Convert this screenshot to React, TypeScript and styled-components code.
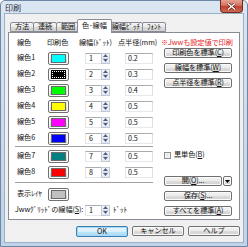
import React from 'react';
import styled, { createGlobalStyle } from 'styled-components';

const GlobalStyle = createGlobalStyle`
  html, body {
    margin: 0;
    padding: 0;
    background: #ffffff;
  }
  body {
    font-family: "Noto Sans CJK JP", "Noto Sans", sans-serif;
    font-size: 7.2px;
    letter-spacing: -0.1px;
    color: #111;
  }
`;

const Window = styled.div`
  box-sizing: border-box;
  width: 248px;
  height: 247px;
  display: flex;
  flex-direction: column;
  border: 1px solid #6d88a6;
  border-radius: 5px 5px 0 0;
  background: linear-gradient(180deg, #dbe6f2 0%, #cddcec 45%, #c0d3e8 100%);
`;

const TitleBar = styled.div`
  height: 12px;
  display: flex;
  align-items: flex-start;
  flex: none;
`;

const Title = styled.div`
  margin: 2px 0 0 4px;
  line-height: 9px;
  font-size: 8px;
  color: #1e2a38;
`;

const CloseButton = styled.div`
  box-sizing: border-box;
  margin: -1px 4px 0 auto;
  width: 23px;
  height: 13px;
  border: 1px solid #6f2a22;
  border-top: none;
  border-radius: 0 0 4px 4px;
  background: linear-gradient(180deg, #e6a293 0%, #d2735f 45%, #c0402c 55%, #cf6a52 100%);
  display: flex;
  align-items: center;
  justify-content: center;
`;

const Client = styled.div`
  flex: 1;
  margin: 0 3px 3px 3px;
  border: 1px solid #9cb0c6;
  background: #f0f0f0;
  padding: 5px 3px 0 3px;
  display: flex;
  flex-direction: column;
`;

const TabStrip = styled.div`
  height: 14px;
  display: flex;
  align-items: flex-end;
  padding-left: 2px;
  margin-bottom: -1px;
  position: relative;
  z-index: 1;
`;

const Tab = styled.div<{ $active?: boolean }>`
  box-sizing: border-box;
  min-width: ${(p) => (p.$active ? '28px' : '24px')};
  height: ${(p) => (p.$active ? '14px' : '10px')};
  margin: ${(p) => (p.$active ? '0 -2px 0 -3px' : '0 0 1px -1px')};
  padding: ${(p) => (p.$active ? '0 4px 2px' : '0 2px')};
  border: 1px solid #898c95;
  border-bottom: ${(p) => (p.$active ? 'none' : '1px solid #898c95')};
  border-radius: 2px 2px 0 0;
  background: ${(p) =>
    p.$active ? '#ffffff' : 'linear-gradient(180deg, #f3f3f3 0%, #ebebeb 50%, #dcdcdc 51%, #d0d0d0 100%)'};
  position: relative;
  z-index: ${(p) => (p.$active ? 2 : 0)};
  display: flex;
  align-items: center;
  justify-content: center;
  white-space: nowrap;
  line-height: 1;
  &:first-child {
    margin-left: 0;
  }
`;

const Panel = styled.div`
  box-sizing: border-box;
  flex: none;
  height: 188px;
  border: 1px solid #898c95;
  background: #ffffff;
  padding: 3px 0 0 8px;
  display: flex;
`;

const LeftTable = styled.div`
  display: flex;
  flex-direction: column;
`;

const Row = styled.div<{ $head?: boolean }>`
  display: grid;
  grid-template-columns: 31px 37px 40px 28px;
  height: ${(p) => (p.$head ? '14px' : '16px')};
  align-items: center;
  white-space: nowrap;
`;

const HeadCell = styled.div<{ $shift?: number }>`
  margin-left: ${(p) => p.$shift ?? 0}px;
  line-height: 1;
`;

const Label = styled.div<{ $span?: boolean }>`
  line-height: 1;
  grid-column: ${(p) => (p.$span ? '1 / 3' : 'auto')};
  margin-left: ${(p) => (p.$span ? '-2px' : '0')};
`;

const Separator = styled.div<{ $gap?: number }>`
  margin: ${(p) => p.$gap ?? 0}px 0 ${(p) => p.$gap ?? 0}px -2px;
  width: 138px;
  height: 0;
  border-top: 1px solid #a0a0a0;
  border-bottom: 1px solid #ffffff;
`;

const SwatchButton = styled.div`
  box-sizing: border-box;
  width: 21px;
  height: 13px;
  border: 1px solid #707070;
  border-radius: 2px;
  background: linear-gradient(180deg, #f2f2f2 0%, #ebebeb 50%, #dddddd 51%, #cfcfcf 100%);
  display: flex;
  align-items: center;
  justify-content: center;
  box-shadow: inset 0 0 0 1px #fcfcfc;
`;

const Swatch = styled.div<{ $color: string; $focus?: boolean }>`
  box-sizing: border-box;
  width: 15px;
  height: 9px;
  background: ${(p) => p.$color};
  border: 1px solid ${(p) => (p.$focus ? '#000' : '#6b6b6b')};
  outline: ${(p) => (p.$focus ? '1px dotted #ffffff' : 'none')};
  outline-offset: -2px;
`;

const Spin = styled.div`
  display: flex;
  height: 11px;
  width: 25px;
`;

const SpinText = styled.div`
  box-sizing: border-box;
  width: 16px;
  height: 11px;
  border: 1px solid #abadb3;
  border-right: none;
  border-bottom-color: #e3e9ef;
  border-left-color: #e2e3ea;
  background: #fff;
  padding-left: 3px;
  line-height: 9px;
`;

const SpinButtons = styled.div`
  box-sizing: border-box;
  width: 9px;
  height: 11px;
  border: 1px solid #c2c9d4;
  display: flex;
  flex-direction: column;
`;

const SpinHalf = styled.div`
  flex: 1;
  display: flex;
  align-items: center;
  justify-content: center;
  background: linear-gradient(180deg, #f7f8fa 0%, #e6e9ef 100%);
  & + & {
    border-top: 1px solid #d4d9e2;
  }
`;

const TextBox = styled.div`
  box-sizing: border-box;
  width: 28px;
  height: 11px;
  border: 1px solid #abadb3;
  border-bottom-color: #e3e9ef;
  border-left-color: #e2e3ea;
  border-right-color: #dbdfe6;
  background: #fff;
  padding-left: 2px;
  line-height: 9px;
`;

const UnitCell = styled.div`
  display: flex;
  align-items: center;
`;

const Unit = styled.span`
  margin-left: 3px;
  line-height: 1;
`;

const RightColumn = styled.div`
  margin-left: 11px;
  width: 68px;
  display: flex;
  flex-direction: column;
`;

const RedNote = styled.div`
  height: 12px;
  margin-left: -3px;
  color: #e8231c;
  white-space: nowrap;
  line-height: 12px;
`;

const Button = styled.div<{ $width?: number; $default?: boolean; $top?: number }>`
  box-sizing: border-box;
  width: ${(p) => (p.$width ? `${p.$width}px` : '100%')};
  height: ${(p) => (p.$default ? '11px' : '10px')};
  margin-top: ${(p) => p.$top ?? 0}px;
  border: 1px solid ${(p) => (p.$default ? '#3c7fb1' : '#707070')};
  border-radius: 2px;
  background: ${(p) =>
    p.$default
      ? 'linear-gradient(180deg, #eaf6fd 0%, #d9f0fc 50%, #bee6fd 51%, #a7d9f5 100%)'
      : 'linear-gradient(180deg, #f2f2f2 0%, #ebebeb 50%, #dddddd 51%, #cfcfcf 100%)'};
  box-shadow: inset 0 0 0 1px ${(p) => (p.$default ? '#a4d8f6' : '#fbfbfb')};
  display: flex;
  align-items: center;
  justify-content: center;
  white-space: nowrap;
  line-height: 1;
  flex: none;
`;

const SplitRow = styled.div`
  display: flex;
  margin-top: 16px;
  gap: 1px;
`;

const CheckRow = styled.div`
  margin-top: 62px;
  height: 10px;
  display: flex;
  align-items: center;
  line-height: 1;
`;

const CheckBox = styled.div`
  box-sizing: border-box;
  width: 7px;
  height: 7px;
  border: 1px solid #8f8f8f;
  background: linear-gradient(135deg, #dcdcdc 0%, #f4f4f4 100%);
  box-shadow: inset 0 0 0 1px #f4f4f4;
  margin-right: 3px;
`;

const ButtonBar = styled.div`
  display: flex;
  justify-content: flex-end;
  gap: 4px;
  margin-top: 6px;
`;

const Arrow = ({ up }: { up?: boolean }) => (
  <svg width="5" height="3" viewBox="0 0 5 3">
    <path d={up ? 'M0 3 L2.5 0 L5 3 Z' : 'M0 0 L2.5 3 L5 0 Z'} fill="#4d6185" />
  </svg>
);

const SpinBox = ({ value }: { value: number }) => (
  <Spin>
    <SpinText>{value}</SpinText>
    <SpinButtons>
      <SpinHalf>
        <Arrow up />
      </SpinHalf>
      <SpinHalf>
        <Arrow />
      </SpinHalf>
    </SpinButtons>
  </Spin>
);

const lines = [
  { color: '#00ffff', width: 1, radius: '0.2' },
  { color: '#000000', width: 2, radius: '0.3', focus: true },
  { color: '#00ff00', width: 3, radius: '0.4' },
  { color: '#ffff00', width: 4, radius: '0.5' },
  { color: '#ff00ff', width: 5, radius: '0.5' },
  { color: '#0000ff', width: 6, radius: '0.5' },
  { color: '#008080', width: 7, radius: '0.5' },
  { color: '#ff0000', width: 8, radius: '0.5' },
];

const LineRow = ({ index }: { index: number }) => {
  const l = lines[index];
  return (
    <Row>
      <Label>線色{index + 1}</Label>
      <SwatchButton>
        <Swatch $color={l.color} $focus={l.focus} />
      </SwatchButton>
      <SpinBox value={l.width} />
      <TextBox>{l.radius}</TextBox>
    </Row>
  );
};

export default function App() {
  return (
    <>
      <GlobalStyle />
      <Window>
        <TitleBar>
          <Title>印刷</Title>
          <CloseButton>
            <svg width="9" height="7" viewBox="0 0 9 7">
              <path d="M1 0.5 L8 6.5 M8 0.5 L1 6.5" stroke="#5a1a12" strokeWidth="2.6" />
              <path d="M1 0.5 L8 6.5 M8 0.5 L1 6.5" stroke="#ffffff" strokeWidth="1.4" />
            </svg>
          </CloseButton>
        </TitleBar>
        <Client>
          <TabStrip>
            <Tab>方法</Tab>
            <Tab>連続</Tab>
            <Tab>範囲</Tab>
            <Tab $active>色･線幅</Tab>
            <Tab>線幅ﾋﾟｯﾁ</Tab>
            <Tab>ﾌｫﾝﾄ</Tab>
          </TabStrip>
          <Panel>
            <LeftTable>
              <Row $head>
                <HeadCell>線色</HeadCell>
                <HeadCell $shift={-1}>印刷色</HeadCell>
                <HeadCell $shift={-6}>線幅(ﾄﾞｯﾄ)</HeadCell>
                <HeadCell $shift={-7}>点半径(mm)</HeadCell>
              </Row>
              {[0, 1, 2, 3, 4, 5].map((i) => (
                <LineRow key={i} index={i} />
              ))}
              <Separator />
              {[6, 7].map((i) => (
                <LineRow key={i} index={i} />
              ))}
              <Separator $gap={2} />
              <Row>
                <Label>表示ﾚｲﾔ</Label>
                <SwatchButton>
                  <Swatch $color="#c0c0c0" />
                </SwatchButton>
              </Row>
              <Row>
                <Label $span>
                  Jwwｸﾞﾘｯﾄﾞの線幅(<u>S</u>):
                </Label>
                <UnitCell>
                  <SpinBox value={1} />
                  <Unit>ﾄﾞｯﾄ</Unit>
                </UnitCell>
              </Row>
            </LeftTable>
            <RightColumn>
              <RedNote>※Jwwも設定値で印刷</RedNote>
              <Button>
                印刷色を標準(<u>C</u>)
              </Button>
              <Button $top={5}>
                線幅を標準(<u>W</u>)
              </Button>
              <Button $top={5}>
                点半径を標準(<u>R</u>)
              </Button>
              <CheckRow>
                <CheckBox />
                黒単色(<u>B</u>)
              </CheckRow>
              <SplitRow>
                <Button $width={58}>
                  開(<u>O</u>)...
                </Button>
                <Button $width={9}>
                  <svg width="5" height="3" viewBox="0 0 5 3">
                    <path d="M0 0 L2.5 3 L5 0 Z" fill="#000" />
                  </svg>
                </Button>
              </SplitRow>
              <Button $top={5}>
                保存(<u>S</u>)...
              </Button>
              <Button $top={5}>
                すべてを標準(<u>A</u>)
              </Button>
            </RightColumn>
          </Panel>
          <ButtonBar>
            <Button $width={52} $default>
              OK
            </Button>
            <Button $width={52}>キャンセル</Button>
            <Button $width={52}>ヘルプ</Button>
          </ButtonBar>
        </Client>
      </Window>
    </>
  );
}
